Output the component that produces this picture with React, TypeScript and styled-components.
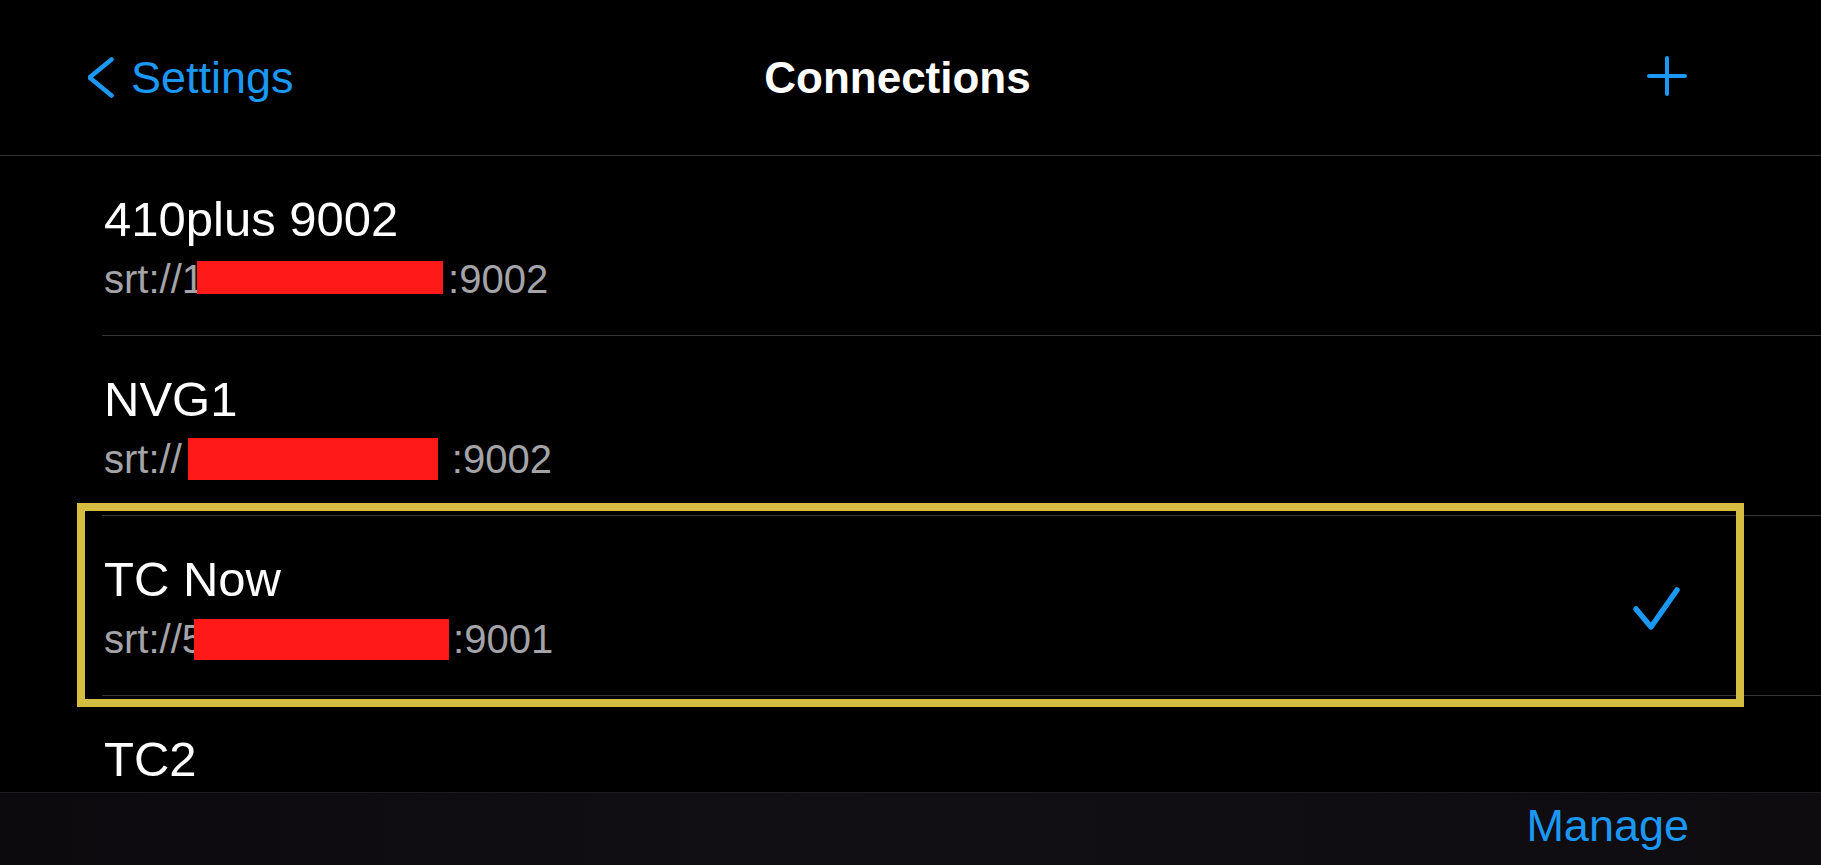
import React from 'react';
import styled, { createGlobalStyle } from 'styled-components';

const BLUE = '#1b98f3';
const SEPARATOR = '#363638';

const GlobalStyle = createGlobalStyle`
  html, body {
    margin: 0;
    padding: 0;
    background: #000;
  }
  body {
    font-family: 'Liberation Sans', Arial, Helvetica, sans-serif;
    -webkit-font-smoothing: antialiased;
  }
`;

const Screen = styled.div`
  display: flex;
  flex-direction: column;
  height: 100vh;
  background: #000;
  overflow: hidden;
`;

const NavBar = styled.header`
  display: grid;
  grid-template-columns: 1fr auto 1fr;
  align-items: center;
  height: 155px;
  padding: 0 114px 0 88px;
  border-bottom: 1px solid #313133;
  flex-shrink: 0;
`;

const BackButton = styled.button`
  justify-self: start;
  display: flex;
  align-items: center;
  gap: 17px;
  padding: 0;
  border: 0;
  background: none;
  color: ${BLUE};
  font-family: inherit;
  font-size: 45px;
  cursor: pointer;
`;

const NavTitle = styled.h1`
  margin: 0;
  color: #fff;
  font-size: 44px;
  font-weight: 700;
`;

const AddButton = styled.button`
  justify-self: end;
  display: flex;
  margin-right: 20px;
  margin-bottom: 3px;
  padding: 0;
  border: 0;
  background: none;
  cursor: pointer;
`;

const List = styled.ul`
  flex: 1;
  margin: 0;
  padding: 0;
  list-style: none;
  overflow: hidden;
`;

const Row = styled.li`
  position: relative;
  display: flex;
  align-items: center;
  justify-content: space-between;
  height: 180px;
  box-sizing: border-box;
  margin-left: 102px;
  padding: 35px 140px 25px 2px;
  border-bottom: 1px solid ${SEPARATOR};
`;

const RowText = styled.div`
  display: flex;
  flex-direction: column;
  align-self: stretch;
`;

const RowTitle = styled.div`
  color: #fff;
  font-size: 49px;
  line-height: 56px;
  white-space: nowrap;
`;

const RowAddress = styled.div`
  color: #a3a3a8;
  font-size: 40px;
  line-height: 64px;
  white-space: nowrap;
`;

const Redact = styled.span<{ $w: number; $h: number; $shift: number; $ml: number; $mr: number }>`
  position: relative;
  z-index: 1;
  display: inline-block;
  width: ${(p) => p.$w}px;
  height: ${(p) => p.$h}px;
  margin-left: ${(p) => p.$ml}px;
  margin-right: ${(p) => p.$mr}px;
  vertical-align: ${(p) => p.$shift}px;
  background: #ff1919;
`;

const CheckMark = styled.svg`
  flex-shrink: 0;
  margin-bottom: 4px;
`;

const Highlight = styled.div`
  position: absolute;
  top: -13px;
  bottom: -12px;
  left: -25px;
  right: 77px;
  border: 8px solid #d4bd40;
  pointer-events: none;
`;

const Toolbar = styled.footer`
  display: flex;
  align-items: center;
  justify-content: flex-end;
  height: 73px;
  flex-shrink: 0;
  padding: 0 132px 6px 0;
  box-sizing: border-box;
  background: linear-gradient(90deg, #0c0a0d 0%, #110f13 45%, #0e0c0f 100%);
  border-top: 1px solid #1e1c20;
`;

const ToolbarButton = styled.button`
  padding: 0;
  border: 0;
  background: none;
  color: ${BLUE};
  font-family: inherit;
  font-size: 45px;
  cursor: pointer;
`;

type Connection = {
  name: string;
  address?: {
    prefix: string;
    suffix: string;
    redact: { w: number; h: number; shift: number; ml: number; mr: number };
  };
  selected?: boolean;
};

const connections: Connection[] = [
  {
    name: '410plus 9002',
    address: {
      prefix: 'srt://1',
      suffix: ':9002',
      redact: { w: 246, h: 33, shift: -1, ml: -7, mr: 5 },
    },
  },
  {
    name: 'NVG1',
    address: {
      prefix: 'srt://',
      suffix: ':9002',
      redact: { w: 250, h: 42, shift: -7, ml: 6, mr: 14 },
    },
  },
  {
    name: 'TC Now',
    address: {
      prefix: 'srt://5',
      suffix: ':9001',
      redact: { w: 255, h: 41, shift: -7, ml: -10, mr: 4 },
    },
    selected: true,
  },
  { name: 'TC2' },
];

const App: React.FC = () => {
  return (
    <Screen>
      <GlobalStyle />
      <NavBar>
        <BackButton>
          <svg width="26" height="42" viewBox="0 0 26 42" fill="none">
            <path
              d="M23.5 2.5 L1.5 20.5 L23.5 38.5"
              stroke={BLUE}
              strokeWidth="4.5"
              strokeLinecap="round"
              strokeLinejoin="round"
            />
          </svg>
          Settings
        </BackButton>
        <NavTitle>Connections</NavTitle>
        <AddButton aria-label="Add">
          <svg width="40" height="40" viewBox="0 0 40 40" fill="none">
            <path d="M20 2 V38 M2 20 H38" stroke={BLUE} strokeWidth="4" strokeLinecap="round" />
          </svg>
        </AddButton>
      </NavBar>

      <List>
        {connections.map((c) => (
          <Row key={c.name}>
            <RowText>
              <RowTitle>{c.name}</RowTitle>
              {c.address && (
                <RowAddress>
                  {c.address.prefix}
                  <Redact
                    $w={c.address.redact.w}
                    $h={c.address.redact.h}
                    $shift={c.address.redact.shift}
                    $ml={c.address.redact.ml}
                    $mr={c.address.redact.mr}
                  />
                  {c.address.suffix}
                </RowAddress>
              )}
            </RowText>
            {c.selected && (
              <>
                <CheckMark width="50" height="47" viewBox="0 0 50 47" fill="none">
                  <path
                    d="M5 24 L20 42 L46 5"
                    stroke={BLUE}
                    strokeWidth="5.5"
                    strokeLinecap="round"
                    strokeLinejoin="round"
                  />
                </CheckMark>
                <Highlight />
              </>
            )}
          </Row>
        ))}
      </List>

      <Toolbar>
        <ToolbarButton>Manage</ToolbarButton>
      </Toolbar>
    </Screen>
  );
};

export default App;
